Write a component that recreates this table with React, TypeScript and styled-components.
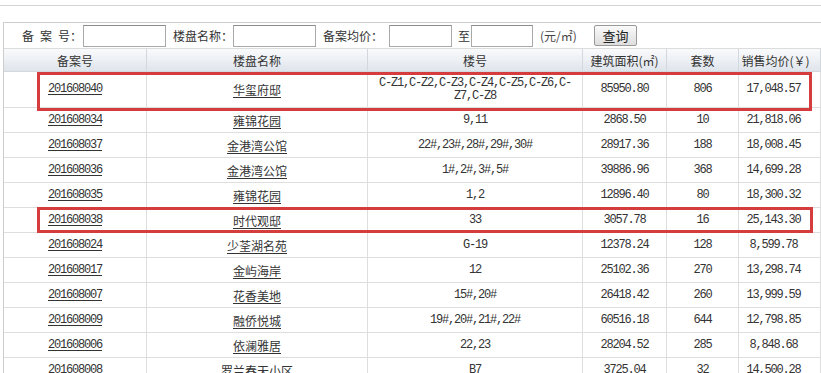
import React from 'react';
import styled, { createGlobalStyle } from 'styled-components';

const GlobalStyle = createGlobalStyle`
  * { box-sizing: border-box; }
  body {
    margin: 0;
    background: #fff;
    overflow: hidden;
    color: #333;
    font-family: "Noto Sans CJK SC", "Liberation Sans", sans-serif;
    font-size: 12px;
  }
`;

interface Row {
  code: string;
  name: string;
  buildings: string;
  area: string;
  units: string;
  price: string;
}

const rows: Row[] = [
  { code: '201608040', name: '华玺府邸', buildings: 'C-Z1,C-Z2,C-Z3,C-Z4,C-Z5,C-Z6,C-Z7,C-Z8', area: '85950.80', units: '806', price: '17,048.57' },
  { code: '201608034', name: '雍锦花园', buildings: '9,11', area: '2868.50', units: '10', price: '21,818.06' },
  { code: '201608037', name: '金港湾公馆', buildings: '22#,23#,28#,29#,30#', area: '28917.36', units: '188', price: '18,008.45' },
  { code: '201608036', name: '金港湾公馆', buildings: '1#,2#,3#,5#', area: '39886.96', units: '368', price: '14,699.28' },
  { code: '201608035', name: '雍锦花园', buildings: '1,2', area: '12896.40', units: '80', price: '18,300.32' },
  { code: '201608038', name: '时代观邸', buildings: '33', area: '3057.78', units: '16', price: '25,143.30' },
  { code: '201608024', name: '少荃湖名苑', buildings: 'G-19', area: '12378.24', units: '128', price: '8,599.78' },
  { code: '201608017', name: '金屿海岸', buildings: '12', area: '25102.36', units: '270', price: '13,298.74' },
  { code: '201608007', name: '花香美地', buildings: '15#,20#', area: '26418.42', units: '260', price: '13,999.59' },
  { code: '201608009', name: '融侨悦城', buildings: '19#,20#,21#,22#', area: '60516.18', units: '644', price: '12,798.85' },
  { code: '201608006', name: '依澜雅居', buildings: '22,23', area: '28204.52', units: '285', price: '8,848.68' },
  { code: '201608008', name: '罗兰春天小区', buildings: 'B7', area: '3725.04', units: '32', price: '14,500.28' },
];

const columns = [143, 221, 215, 84, 72, 82];

const App: React.FC = () => {
  return (
    <>
      <GlobalStyle />
      <TopRule />
      <Panel>
        <SearchBar>
          <Label>备&ensp;案&ensp;号：</Label>
          <Field $w={83} $ml={1} />
          <Label $ml={7}>楼盘名称：</Label>
          <Field $w={83} />
          <Label $ml={7}>备案均价：</Label>
          <Field $w={63} $ml={6} />
          <Label $ml={6}>至</Label>
          <Field $w={62} $ml={1} />
          <Unit>(元/㎡)</Unit>
          <QueryButton>查询</QueryButton>
        </SearchBar>
        <Table>
          <colgroup>
            {columns.map((w, i) => (
              <col key={i} style={{ width: w }} />
            ))}
          </colgroup>
          <thead>
            <tr>
              <Th>备案号</Th>
              <Th>楼盘名称</Th>
              <Th>楼号</Th>
              <Th>建筑面积(㎡)</Th>
              <Th>套数</Th>
              <Th $pr={8}>销售均价(￥)</Th>
            </tr>
          </thead>
          <tbody>
            {rows.map((r, i) => (
              <tr key={r.code}>
                <Td $h={i === 0 ? 36 : 25} $mono>
                  <Link>{r.code}</Link>
                </Td>
                <Td $h={i === 0 ? 36 : 25}>
                  <Link>{r.name}</Link>
                </Td>
                <Td $h={i === 0 ? 36 : 25} $mono>{r.buildings}</Td>
                <Td $h={i === 0 ? 36 : 25} $mono>{r.area}</Td>
                <Td $h={i === 0 ? 36 : 25} $mono>{r.units}</Td>
                <Td $h={i === 0 ? 36 : 25} $mono $pr={12}>{r.price}</Td>
              </tr>
            ))}
          </tbody>
        </Table>
        <Highlight $top={49} $w={775} $h={39} />
        <Highlight $top={184} $w={776} $h={26} />
      </Panel>
    </>
  );
};

export default App;

const TopRule = styled.div`
  height: 6px;
  border-bottom: 1px solid #d4d4d4;
  margin-bottom: 16px;
`;

const Panel = styled.div`
  position: relative;
  margin-left: 3px;
  border-left: 1px solid #cdcdcd;
  border-top: 1px solid #cdcdcd;
`;

const SearchBar = styled.div`
  display: flex;
  align-items: center;
  height: 26px;
  padding-left: 18px;
  border-bottom: 1px solid #dcdcdc;
  white-space: nowrap;
`;

const Label = styled.span<{ $ml?: number }>`
  margin-left: ${(p) => p.$ml ?? 0}px;
  font-size: 12px;
  line-height: 14px;
  color: #333;
`;

const Field = styled.input.attrs({ type: 'text' })<{ $w: number; $ml?: number }>`
  width: ${(p) => p.$w}px;
  height: 22px;
  margin: 0 0 0 ${(p) => p.$ml ?? 0}px;
  padding: 0 2px;
  border: 1px solid #a9a9a9;
  border-top-color: #8c8c8c;
  background: #fff;
  outline: none;
`;

const Unit = styled.span`
  width: 44px;
  margin-left: 7px;
  font-size: 12px;
  color: #444;
`;

const QueryButton = styled.button`
  width: 43px;
  height: 21px;
  margin-left: 10px;
  padding: 0;
  border: 1px solid #9a9a9a;
  border-radius: 2px;
  background: linear-gradient(#fafafa, #dedede);
  font-family: "Noto Sans CJK SC", sans-serif;
  font-size: 13px;
  line-height: 19px;
  color: #222;
`;

const Table = styled.table`
  width: 817px;
  table-layout: fixed;
  border-collapse: separate;
  border-spacing: 0;
`;

const Th = styled.th<{ $pr?: number }>`
  height: 23px;
  padding: 0 ${(p) => p.$pr ?? 0}px 0 0;
  border-right: 1px solid #d3d8df;
  border-bottom: 1px solid #d3d8df;
  background: linear-gradient(#f9fafc 0%, #eef1f5 45%, #dfe4eb 100%);
  font-weight: normal;
  font-size: 12px;
  color: #333;
  white-space: nowrap;
  overflow: hidden;
  text-align: center;
`;

const Td = styled.td<{ $h: number; $mono?: boolean; $pr?: number }>`
  height: ${(p) => p.$h}px;
  padding: 0 ${(p) => (p.$pr ?? 0) + 4}px 0 4px;
  border-right: 1px solid #dedede;
  border-bottom: 1px solid #dedede;
  text-align: center;
  vertical-align: middle;
  font-size: 12px;
  line-height: 13px;
  color: #333;
  font-family: ${(p) =>
    p.$mono ? '"Liberation Mono", "Noto Sans CJK SC", monospace' : '"Noto Sans CJK SC", sans-serif'};
  letter-spacing: ${(p) => (p.$mono ? '-1.2px' : '0')};
`;

const Link = styled.a`
  color: #333;
  text-decoration: underline;
  text-underline-offset: 2px;
  cursor: pointer;
`;

const Highlight = styled.div<{ $top: number; $w: number; $h: number }>`
  position: absolute;
  left: 33px;
  top: ${(p) => p.$top}px;
  width: ${(p) => p.$w}px;
  height: ${(p) => p.$h}px;
  border: 3px solid #d43c3e;
  pointer-events: none;
`;
